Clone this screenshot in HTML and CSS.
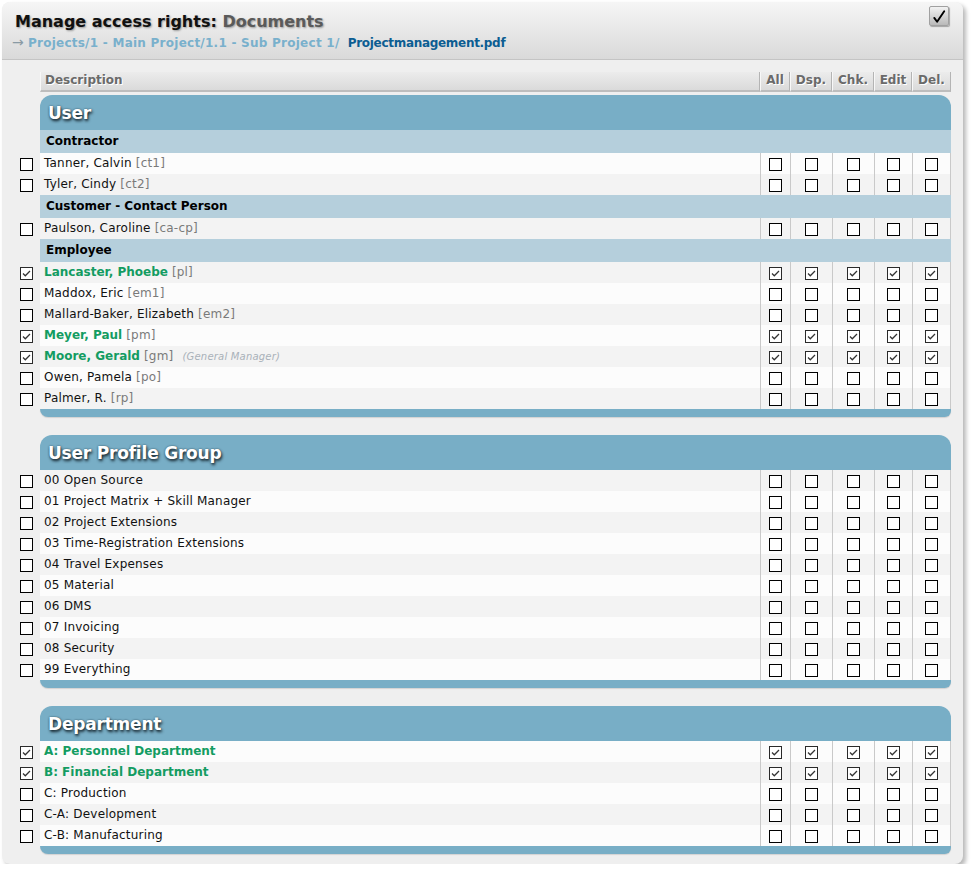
FILE: index.html
```html
<!DOCTYPE html>
<html>
<head>
<meta charset="utf-8">
<link rel="stylesheet" href="styles.css">
</head>
<body>
<div class="panel">
  <div class="head">
    <div class="title">Manage access rights: <span class="title-sub">Documents</span></div>
    <div class="crumb"><span class="arrow">→</span> <span class="path">Projects/1 - Main Project/1.1 - Sub Project 1/</span> <span class="file">Projectmanagement.pdf</span></div>
    <span class="topcheck"><svg width="19" height="19" viewBox="0 0 19 19"><path d="M4.5 11 L7.5 15 L15 4" fill="none" stroke="#000" stroke-width="2" stroke-linecap="round" stroke-linejoin="round"/></svg></span>
  </div>
  <div class="content">
    <div class="row thead">
      <div class="lead"></div>
      <div class="th desc">Description</div>
      <div class="th">All</div>
      <div class="th">Dsp.</div>
      <div class="th">Chk.</div>
      <div class="th">Edit</div>
      <div class="th">Del.</div>
    </div>

    <div class="section">
      <div class="sec-title">User</div>
      <div class="sub">Contractor</div>
      <div class="row w"><div class="lead"><span class="cb"></span></div><div class="desc">Tanner, Calvin <span class="code">[ct1]</span></div><div class="c"><span class="cb"></span></div><div class="c"><span class="cb"></span></div><div class="c"><span class="cb"></span></div><div class="c"><span class="cb"></span></div><div class="c"><span class="cb"></span></div></div>
      <div class="row g"><div class="lead"><span class="cb"></span></div><div class="desc">Tyler, Cindy <span class="code">[ct2]</span></div><div class="c"><span class="cb"></span></div><div class="c"><span class="cb"></span></div><div class="c"><span class="cb"></span></div><div class="c"><span class="cb"></span></div><div class="c"><span class="cb"></span></div></div>
      <div class="sub">Customer - Contact Person</div>
      <div class="row g"><div class="lead"><span class="cb"></span></div><div class="desc">Paulson, Caroline <span class="code">[ca-cp]</span></div><div class="c"><span class="cb"></span></div><div class="c"><span class="cb"></span></div><div class="c"><span class="cb"></span></div><div class="c"><span class="cb"></span></div><div class="c"><span class="cb"></span></div></div>
      <div class="sub">Employee</div>
      <div class="row g"><div class="lead"><span class="cb on"></span></div><div class="desc"><span class="name-on">Lancaster, Phoebe</span> <span class="code">[pl]</span></div><div class="c"><span class="cb on"></span></div><div class="c"><span class="cb on"></span></div><div class="c"><span class="cb on"></span></div><div class="c"><span class="cb on"></span></div><div class="c"><span class="cb on"></span></div></div>
      <div class="row w"><div class="lead"><span class="cb"></span></div><div class="desc">Maddox, Eric <span class="code">[em1]</span></div><div class="c"><span class="cb"></span></div><div class="c"><span class="cb"></span></div><div class="c"><span class="cb"></span></div><div class="c"><span class="cb"></span></div><div class="c"><span class="cb"></span></div></div>
      <div class="row g"><div class="lead"><span class="cb"></span></div><div class="desc">Mallard-Baker, Elizabeth <span class="code">[em2]</span></div><div class="c"><span class="cb"></span></div><div class="c"><span class="cb"></span></div><div class="c"><span class="cb"></span></div><div class="c"><span class="cb"></span></div><div class="c"><span class="cb"></span></div></div>
      <div class="row w"><div class="lead"><span class="cb on"></span></div><div class="desc"><span class="name-on">Meyer, Paul</span> <span class="code">[pm]</span></div><div class="c"><span class="cb on"></span></div><div class="c"><span class="cb on"></span></div><div class="c"><span class="cb on"></span></div><div class="c"><span class="cb on"></span></div><div class="c"><span class="cb on"></span></div></div>
      <div class="row g"><div class="lead"><span class="cb on"></span></div><div class="desc"><span class="name-on">Moore, Gerald</span> <span class="code">[gm]</span> <span class="note">(General Manager)</span></div><div class="c"><span class="cb on"></span></div><div class="c"><span class="cb on"></span></div><div class="c"><span class="cb on"></span></div><div class="c"><span class="cb on"></span></div><div class="c"><span class="cb on"></span></div></div>
      <div class="row w"><div class="lead"><span class="cb"></span></div><div class="desc">Owen, Pamela <span class="code">[po]</span></div><div class="c"><span class="cb"></span></div><div class="c"><span class="cb"></span></div><div class="c"><span class="cb"></span></div><div class="c"><span class="cb"></span></div><div class="c"><span class="cb"></span></div></div>
      <div class="row g"><div class="lead"><span class="cb"></span></div><div class="desc">Palmer, R. <span class="code">[rp]</span></div><div class="c"><span class="cb"></span></div><div class="c"><span class="cb"></span></div><div class="c"><span class="cb"></span></div><div class="c"><span class="cb"></span></div><div class="c"><span class="cb"></span></div></div>
      <div class="sec-foot"></div>
    </div>

    <div class="section">
      <div class="sec-title">User Profile Group</div>
      <div class="row g"><div class="lead"><span class="cb"></span></div><div class="desc">00 Open Source</div><div class="c"><span class="cb"></span></div><div class="c"><span class="cb"></span></div><div class="c"><span class="cb"></span></div><div class="c"><span class="cb"></span></div><div class="c"><span class="cb"></span></div></div>
      <div class="row w"><div class="lead"><span class="cb"></span></div><div class="desc">01 Project Matrix + Skill Manager</div><div class="c"><span class="cb"></span></div><div class="c"><span class="cb"></span></div><div class="c"><span class="cb"></span></div><div class="c"><span class="cb"></span></div><div class="c"><span class="cb"></span></div></div>
      <div class="row g"><div class="lead"><span class="cb"></span></div><div class="desc">02 Project Extensions</div><div class="c"><span class="cb"></span></div><div class="c"><span class="cb"></span></div><div class="c"><span class="cb"></span></div><div class="c"><span class="cb"></span></div><div class="c"><span class="cb"></span></div></div>
      <div class="row w"><div class="lead"><span class="cb"></span></div><div class="desc">03 Time-Registration Extensions</div><div class="c"><span class="cb"></span></div><div class="c"><span class="cb"></span></div><div class="c"><span class="cb"></span></div><div class="c"><span class="cb"></span></div><div class="c"><span class="cb"></span></div></div>
      <div class="row g"><div class="lead"><span class="cb"></span></div><div class="desc">04 Travel Expenses</div><div class="c"><span class="cb"></span></div><div class="c"><span class="cb"></span></div><div class="c"><span class="cb"></span></div><div class="c"><span class="cb"></span></div><div class="c"><span class="cb"></span></div></div>
      <div class="row w"><div class="lead"><span class="cb"></span></div><div class="desc">05 Material</div><div class="c"><span class="cb"></span></div><div class="c"><span class="cb"></span></div><div class="c"><span class="cb"></span></div><div class="c"><span class="cb"></span></div><div class="c"><span class="cb"></span></div></div>
      <div class="row g"><div class="lead"><span class="cb"></span></div><div class="desc">06 DMS</div><div class="c"><span class="cb"></span></div><div class="c"><span class="cb"></span></div><div class="c"><span class="cb"></span></div><div class="c"><span class="cb"></span></div><div class="c"><span class="cb"></span></div></div>
      <div class="row w"><div class="lead"><span class="cb"></span></div><div class="desc">07 Invoicing</div><div class="c"><span class="cb"></span></div><div class="c"><span class="cb"></span></div><div class="c"><span class="cb"></span></div><div class="c"><span class="cb"></span></div><div class="c"><span class="cb"></span></div></div>
      <div class="row g"><div class="lead"><span class="cb"></span></div><div class="desc">08 Security</div><div class="c"><span class="cb"></span></div><div class="c"><span class="cb"></span></div><div class="c"><span class="cb"></span></div><div class="c"><span class="cb"></span></div><div class="c"><span class="cb"></span></div></div>
      <div class="row w"><div class="lead"><span class="cb"></span></div><div class="desc">99 Everything</div><div class="c"><span class="cb"></span></div><div class="c"><span class="cb"></span></div><div class="c"><span class="cb"></span></div><div class="c"><span class="cb"></span></div><div class="c"><span class="cb"></span></div></div>
      <div class="sec-foot"></div>
    </div>

    <div class="section">
      <div class="sec-title">Department</div>
      <div class="row w"><div class="lead"><span class="cb on"></span></div><div class="desc"><span class="name-on">A: Personnel Department</span></div><div class="c"><span class="cb on"></span></div><div class="c"><span class="cb on"></span></div><div class="c"><span class="cb on"></span></div><div class="c"><span class="cb on"></span></div><div class="c"><span class="cb on"></span></div></div>
      <div class="row g"><div class="lead"><span class="cb on"></span></div><div class="desc"><span class="name-on">B: Financial Department</span></div><div class="c"><span class="cb on"></span></div><div class="c"><span class="cb on"></span></div><div class="c"><span class="cb on"></span></div><div class="c"><span class="cb on"></span></div><div class="c"><span class="cb on"></span></div></div>
      <div class="row w"><div class="lead"><span class="cb"></span></div><div class="desc">C: Production</div><div class="c"><span class="cb"></span></div><div class="c"><span class="cb"></span></div><div class="c"><span class="cb"></span></div><div class="c"><span class="cb"></span></div><div class="c"><span class="cb"></span></div></div>
      <div class="row g"><div class="lead"><span class="cb"></span></div><div class="desc">C-A: Development</div><div class="c"><span class="cb"></span></div><div class="c"><span class="cb"></span></div><div class="c"><span class="cb"></span></div><div class="c"><span class="cb"></span></div><div class="c"><span class="cb"></span></div></div>
      <div class="row w"><div class="lead"><span class="cb"></span></div><div class="desc">C-B: Manufacturing</div><div class="c"><span class="cb"></span></div><div class="c"><span class="cb"></span></div><div class="c"><span class="cb"></span></div><div class="c"><span class="cb"></span></div><div class="c"><span class="cb"></span></div></div>
      <div class="sec-foot"></div>
    </div>
  </div>
</div>
</body>
</html>
```
FILE: styles.css
```css
* { box-sizing: border-box; }
body {
  margin: 0;
  background: #fff;
  font-family: "DejaVu Sans", Verdana, sans-serif;
  font-size: 12px;
  color: #111;
}
.panel {
  margin: 2px 0 0 2px;
  width: 961px;
  height: 862px;
  background: #efefef;
  border-radius: 8px;
  box-shadow: 3px 3px 4px rgba(0,0,0,0.28);
  overflow: hidden;
}
.head {
  position: relative;
  height: 58px;
  padding: 10px 0 0 13px;
  background: linear-gradient(#f6f6f6, #d9d9d9);
  border-bottom: 1px solid #c4c4c4;
}
.title {
  font-size: 16px;
  font-weight: bold;
  color: #111;
  text-shadow: 1px 1px 2px rgba(0,0,0,0.35);
  line-height: 20px;
}
.title-sub { color: #5a5a5a; }
.crumb {
  margin-top: 1px;
  margin-left: -3px;
  font-size: 12px;
  font-weight: bold;
  line-height: 18px;
}
.arrow { color: #8a9aa4; font-weight: normal; font-size: 14px; }
.path { color: #79b0cc; letter-spacing: 0.25px; }
.file { color: #0c5d92; margin-left: 4px; letter-spacing: -0.3px; }
.topcheck {
  position: absolute;
  left: 927px;
  top: 4px;
  width: 20px;
  height: 20px;
  border: 1px solid #a0a0a0;
  border-radius: 2px;
  background: linear-gradient(#f2f2f2, #b9b9b9);
  box-shadow: 1px 1px 1px rgba(0,0,0,0.3);
  display: flex;
  align-items: center;
  justify-content: center;
}
.topcheck svg { display: block; }
.content { padding-top: 11px; }
.row {
  display: grid;
  grid-template-columns: 38px 720px 30px 42px 42px 38px 39px;
  height: 21px;
}
.lead {
  background: #efefef;
  display: flex;
  align-items: center;
  padding-left: 18px;
}
.row.w > div:not(.lead) { background: #fcfcfc; }
.row.g > div:not(.lead) { background: #f3f3f3; }
.desc {
  padding-left: 4px;
  line-height: 20px;
  white-space: nowrap;
  letter-spacing: 0.2px;
}
.c {
  border-left: 1px solid #c9c9c9;
  display: flex;
  align-items: center;
  justify-content: center;
}
.c:last-child { border-right: 1px solid #c9c9c9; }
.cb {
  display: inline-block;
  width: 13px;
  height: 13px;
  border: 1px solid #000;
  background: #fff;
  margin-top: 2px;
}
.c .cb { margin-top: 1px; }
.cb.on {
  border-color: #2a2a2a;
  background: #fff url("data:image/svg+xml;utf8,<svg xmlns='http://www.w3.org/2000/svg' width='11' height='11' viewBox='0 0 11 11'><path d='M2 5.5 L4.3 7.8 L9 3' fill='none' stroke='%23333' stroke-width='1.25'/></svg>") no-repeat center;
}
.code { color: #7a7a7a; }
.name-on { color: #139c62; font-weight: bold; letter-spacing: 0; }
.note {
  color: #a9b1b9;
  font-style: italic;
  font-size: 10px;
  margin-left: 5px;
}
.thead { height: 21px; margin-bottom: 3px; }
.thead .lead { background: transparent; }
.th {
  margin-top: 1px;
  height: 20px;
  background: linear-gradient(#ececec, #dadada);
  border-left: 1px solid #f8f8f8;
  border-right: 1px solid #b4b4b4;
  border-bottom: 2px solid #bdbdbd;
  color: #6a6a6a;
  font-weight: bold;
  text-align: center;
  line-height: 17px;
  text-shadow: 1px 1px 0 #fff;
  letter-spacing: 0;
}
.th.desc { text-align: left; padding-left: 4px; }
.section { margin-left: 38px; width: 911px; margin-bottom: 18px; }
.section .row { margin-left: -38px; }
.sec-title {
  height: 35px;
  background: #78aec6;
  border-radius: 12px 12px 0 0;
  color: #fff;
  font-size: 17px;
  font-weight: bold;
  padding-left: 8px;
  line-height: 36px;
  letter-spacing: -0.2px;
  text-shadow: 1px 2px 3px #14232b, 0 0 2px #3a5a6a;
}
.sub {
  height: 23px;
  background: #b5cfdc;
  font-weight: bold;
  color: #000;
  padding-left: 6px;
  line-height: 22px;
}
.sec-foot {
  height: 8px;
  background: #78aec6;
  border-radius: 0 0 7px 9px;
  box-shadow: 0 1px 1px rgba(0,0,0,0.12);
}
```
